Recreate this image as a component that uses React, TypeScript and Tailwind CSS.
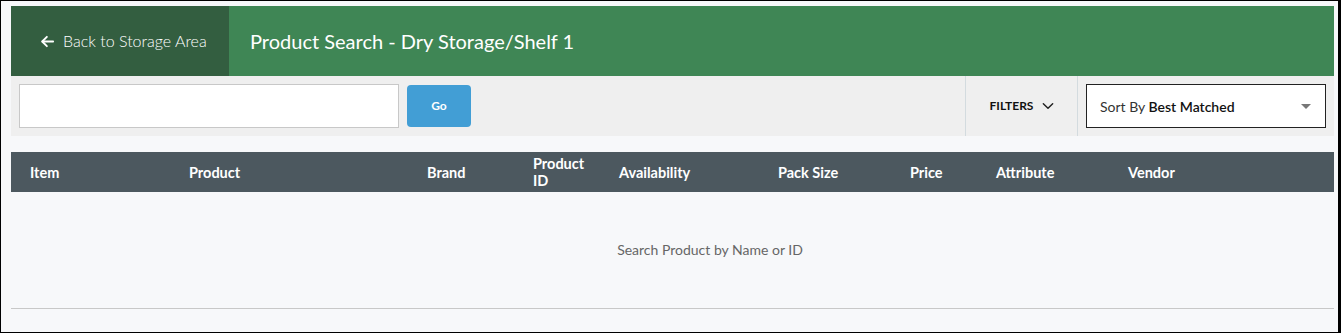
import React from "react";

const cols: { label: React.ReactNode; w: string }[] = [
  { label: "Item", w: "w-[159px]" },
  { label: "Product", w: "w-[238px]" },
  { label: "Brand", w: "w-[106px]" },
  { label: (<>Product<br />ID</>), w: "w-[86px]" },
  { label: "Availability", w: "w-[159px]" },
  { label: "Pack Size", w: "w-[132px]" },
  { label: "Price", w: "w-[86px]" },
  { label: "Attribute", w: "w-[132px]" },
  { label: "Vendor", w: "flex-1" },
];

export default function App() {
  return (
    <div
      className="w-[1341px] h-[333px] bg-[#f7f8fa] border-l border-t border-b border-r-[3px] border-black pl-[10px] pt-[5px] pr-[4px] flex flex-col"
      style={{ fontFamily: "Lato, 'Open Sans', sans-serif" }}
    >
      {/* Header bar */}
      <div className="flex h-[70px] bg-[#3f8655] text-white">
        <div className="w-[218px] bg-[#335e40] flex items-center pl-[29px] gap-[8px] text-[16px]">
          <svg width="15" height="15" viewBox="0 0 24 24" fill="none" stroke="white" strokeWidth="3" strokeLinecap="round" strokeLinejoin="round">
            <path d="M21 12H4" />
            <path d="M11 4.5l-7.5 7.5 7.5 7.5" />
          </svg>
          <span className="font-light">Back to Storage Area</span>
        </div>
        <div className="flex items-center pl-[21px] text-[20px]">
          Product Search - Dry Storage/Shelf 1
        </div>
      </div>

      {/* Toolbar */}
      <div className="flex items-center h-[60px] bg-[#efefef] pl-[8px] pr-[8px]">
        <input className="w-[380px] h-[44px] bg-white border border-[#c8c8c8] outline-none" />
        <button className="ml-[8px] w-[64px] h-[42px] bg-[#429ed5] rounded-[4px] text-white text-[12px] font-bold">
          Go
        </button>
        <div className="flex-1" />
        <div className="h-full w-[113px] border-l border-r border-[#d3dbdf] flex items-center justify-center gap-[8px] pl-[2px]">
          <span className="text-[12px] font-bold text-[#111]">FILTERS</span>
          <svg width="14" height="14" viewBox="0 0 24 24" fill="none" stroke="#222" strokeWidth="2.5" strokeLinecap="round" strokeLinejoin="round">
            <path d="M4 8l8 8 8-8" />
          </svg>
        </div>
        <div className="ml-[8px] w-[240px] h-[44px] bg-white border-[1.5px] border-[#222] flex items-center pl-[13px] pr-[14px] text-[14px] text-[#333]">
          <span>
            Sort By <span className="font-semibold text-[#111]">Best Matched</span>
          </span>
          <div className="flex-1" />
          <div className="w-0 h-0 border-l-[5px] border-r-[5px] border-t-[5px] border-l-transparent border-r-transparent border-t-[#777]" />
        </div>
      </div>

      <div className="h-[16px]" />

      {/* Table header */}
      <div className="flex items-center h-[40px] bg-[#4c585f] text-white font-bold text-[14.5px] leading-[17px] pl-[19px]">
        {cols.map((c, i) => (
          <div key={i} className={c.w}>
            {c.label}
          </div>
        ))}
      </div>

      {/* Body */}
      <div className="h-[116px] flex items-center justify-center pl-[75px] pb-[2px] text-[14px] text-[#666]">
        Search Product by Name or ID
      </div>
      <div className="h-px bg-[#c8c8c8]" />
    </div>
  );
}
